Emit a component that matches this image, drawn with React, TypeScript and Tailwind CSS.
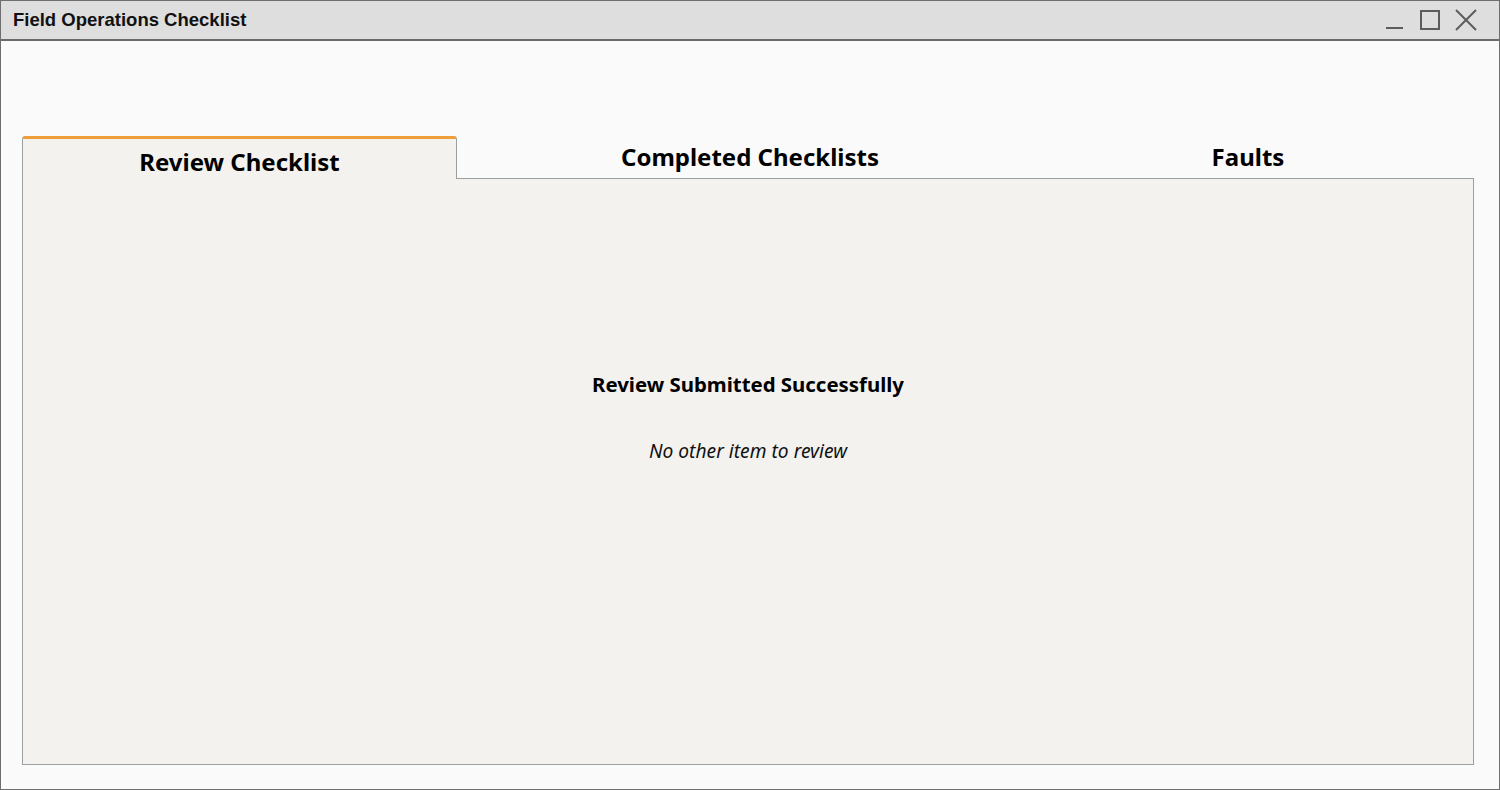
import React from "react";

const tabFont = { fontFamily: "'Noto Sans', 'DejaVu Sans', sans-serif" };

const App = () => {
  return (
    <div className="w-[1500px] h-[790px] flex flex-col border border-[#6e6e6e] bg-[#fafafa]">
      {/* title bar */}
      <div className="h-[40px] shrink-0 flex items-center justify-between bg-[#dedede] border-b-2 border-[#6a6a6a] pl-3 pr-[22px]">
        <span className="text-[18.5px] font-bold text-[#111]" style={{ fontFamily: "'Liberation Sans', Arial, sans-serif" }}>
          Field Operations Checklist
        </span>
        <div className="flex items-center gap-[15px] text-[#5c5c5c]">
          <svg width="19" height="22" viewBox="0 0 19 22">
            <line x1="0" y1="19" x2="17" y2="19" stroke="currentColor" strokeWidth="2" />
          </svg>
          <svg width="20" height="22" viewBox="0 0 20 22">
            <rect x="1" y="2" width="18" height="18" fill="none" stroke="currentColor" strokeWidth="2" />
          </svg>
          <svg width="22" height="22" viewBox="0 0 22 22">
            <path d="M1 1 L21 21 M21 1 L1 21" stroke="currentColor" strokeWidth="2" />
          </svg>
        </div>
      </div>

      {/* body */}
      <div className="flex-1 flex flex-col pt-[95px] pl-[21px] pr-[25px] pb-[24px]">
        {/* tabs row */}
        <div className="flex h-[42px] items-stretch" style={tabFont}>
          <div className="w-[435px] relative z-10 bg-[#f3f2ee] border-x border-[#9aa0a0] border-t-[3px] border-t-[#ee9d37] rounded-t-[3px] -mb-px flex justify-center pt-[8px]">
            <span className="text-[24px] font-bold text-black leading-[30px]">Review Checklist</span>
          </div>
          <div className="w-[586px] flex justify-center pt-[6px]">
            <span className="text-[24px] font-bold text-black leading-[30px]">Completed Checklists</span>
          </div>
          <div className="w-[410px] flex justify-center pt-[6px]">
            <span className="text-[24px] font-bold text-black leading-[30px]">Faults</span>
          </div>
        </div>

        {/* panel */}
        <div className="flex-1 bg-[#f3f2ee] border border-[#9aa0a0] flex flex-col items-center pt-[191px]" style={tabFont}>
          <div className="text-[20.4px] font-bold text-black leading-[28px]">Review Submitted Successfully</div>
          <div className="mt-[40px] text-[19.2px] italic text-[#111] leading-[26px]">No other item to review</div>
        </div>
      </div>
    </div>
  );
};

export default App;
